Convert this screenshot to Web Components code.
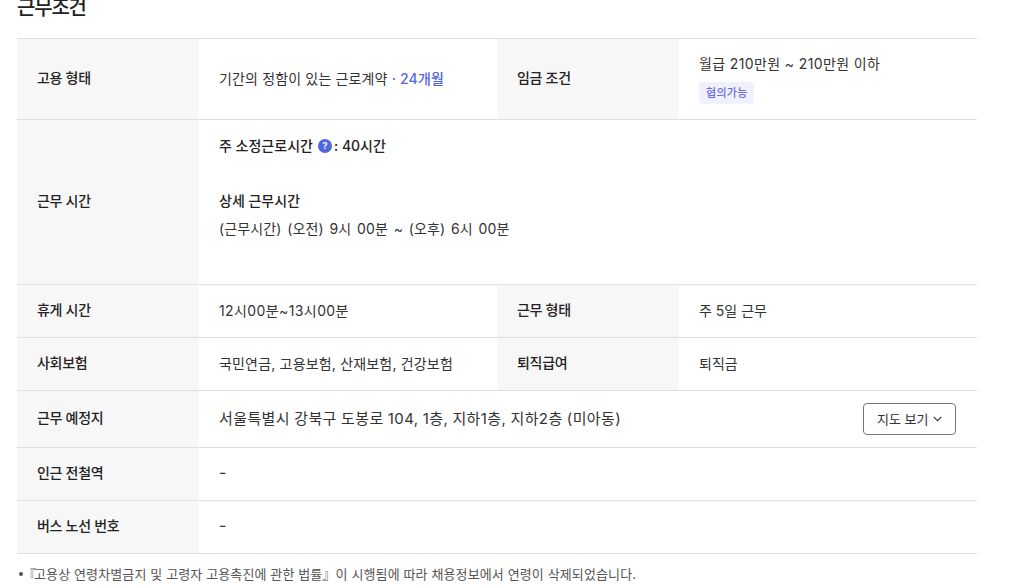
<!DOCTYPE html>
<html lang="ko">
<head>
<meta charset="utf-8">
<style>
  html, body { margin: 0; height: 588px; overflow: hidden; background: #fff; }
  body { font-family: Inter, "Noto Sans CJK KR", sans-serif; color: #333; }
</style>
</head>
<body>
<job-conditions>
  <cond-row>
    <cond-cell label="고용 형태"><span style="letter-spacing:.15px">기간의 정함이 있는 근로계약 <b style="color:#5167e0;font-weight:500">· 24개월</b></span></cond-cell>
    <cond-cell label="임금 조건"><span style="letter-spacing:.37px">월급 210만원 ~ 210만원 이하</span><nego-tag>협의가능</nego-tag></cond-cell>
  </cond-row>
  <cond-row height="165">
    <cond-cell label="근무 시간">
      <work-hours></work-hours>
    </cond-cell>
  </cond-row>
  <cond-row>
    <cond-cell label="휴게 시간"><span style="letter-spacing:.4px">12시00분~13시00분</span></cond-cell>
    <cond-cell label="근무 형태">주 5일 근무</cond-cell>
  </cond-row>
  <cond-row>
    <cond-cell label="사회보험"><span style="letter-spacing:.18px">국민연금, 고용보험, 산재보험, 건강보험</span></cond-cell>
    <cond-cell label="퇴직급여">퇴직금</cond-cell>
  </cond-row>
  <cond-row height="57">
    <cond-cell label="근무 예정지" wide>
      <span style="font-size:15px;letter-spacing:.4px;word-spacing:-.4px">서울특별시 강북구 도봉로 104, 1층, 지하1층, 지하2층 (미아동)</span>
      <map-button slot="action"></map-button>
    </cond-cell>
  </cond-row>
  <cond-row>
    <cond-cell label="인근 전철역"><span style="font-size:16px;line-height:18px;position:relative;top:-1px">-</span></cond-cell>
  </cond-row>
  <cond-row>
    <cond-cell label="버스 노선 번호"><span style="font-size:16px;line-height:18px;position:relative;top:-1px">-</span></cond-cell>
  </cond-row>
</job-conditions>

<script>
class JobConditions extends HTMLElement {
  constructor() {
    super();
    this.attachShadow({ mode: 'open' }).innerHTML = `
      <style>
        :host { display: block; padding: 0 48px 0 17px; margin-top: -5px; }
        h2 {
          margin: 0 0 17px;
          height: 26px;
          line-height: 26px;
          font-size: 20px;
          font-weight: 500;
          letter-spacing: -1.2px;
          color: #222;
        }
        .table { border-top: 1px solid #e0e0e0; }
        .note {
          margin: 11px 0 0;
          padding-left: 2px;
          font-size: 13px;
          line-height: 18px;
          letter-spacing: .12px;
          color: #555;
          display: flex;
          align-items: center;
          gap: 5px;
        }
        .note::before {
          content: '';
          width: 4px;
          height: 4px;
          border-radius: 50%;
          background: #555;
        }
        .open { margin-left: -5px; letter-spacing: -2px; }
      </style>
      <h2>근무조건</h2>
      <div class="table"><slot></slot></div>
      <div class="note"><div><span class="open">『</span>고용상 연령차별금지 및 고령자 고용촉진에 관한 법률』이 시행됨에 따라 채용정보에서 연령이 삭제되었습니다.</div></div>`;
  }
}

class CondRow extends HTMLElement {
  constructor() {
    super();
    this.attachShadow({ mode: 'open' }).innerHTML = `
      <style>
        :host {
          display: flex;
          height: var(--row-height, 52px);
          border-bottom: 1px solid #e0e0e0;
        }
        ::slotted(*) { flex: 1 1 0; min-width: 0; }
      </style>
      <slot></slot>`;
  }

  connectedCallback() {
    const h = this.getAttribute('height');
    if (h) this.style.setProperty('--row-height', (h - 1) + 'px');
    if (this.querySelector('nego-tag')) this.style.setProperty('--row-height', '80px');
  }
}

class CondCell extends HTMLElement {
  constructor() {
    super();
    this.attachShadow({ mode: 'open' }).innerHTML = `
      <style>
        :host {
          display: flex;
          font-size: 14px;
          line-height: 20px;
          color: #333;
        }
        .label {
          flex: 0 0 182px;
          box-sizing: border-box;
          padding: 0 0 2px 20px;
          display: flex;
          align-items: center;
          background: #f7f7f7;
          font-weight: 500;
          letter-spacing: -.3px;
          color: #222;
        }
        .value {
          flex: 1;
          min-width: 0;
          padding: 0 21px 0 20px;
          display: flex;
          align-items: center;
          justify-content: space-between;
        }
      </style>
      <div class="label"></div>
      <div class="value"><div><slot></slot></div><slot name="action"></slot></div>`;
  }

  connectedCallback() {
    this.shadowRoot.querySelector('.label').textContent = this.getAttribute('label');
  }
}

class NegoTag extends HTMLElement {
  constructor() {
    super();
    this.attachShadow({ mode: 'open' }).innerHTML = `
      <style>
        :host {
          display: block;
          width: fit-content;
          margin-top: 8px;
          padding: 0 6px 0 7px;
          height: 22px;
          line-height: 22px;
          border-radius: 4px;
          background: #f0f0fe;
          color: #6a6ee0;
          font-size: 11px;
          font-weight: 500;
          letter-spacing: .3px;
        }
      </style>
      <slot></slot>`;
  }
}

class WorkHours extends HTMLElement {
  constructor() {
    super();
    this.attachShadow({ mode: 'open' }).innerHTML = `
      <style>
        :host { display: block; height: 164px; padding-top: 16px; box-sizing: border-box; line-height: 20px; }
        .strong { font-weight: 500; color: #222; display: flex; align-items: center; white-space: pre; }
        svg { margin: 0 2px 0 5px; }
        .gap { margin-top: 35px; }
        p { margin: 8px 0 0; letter-spacing: .12px; word-spacing: 1.7px; }
      </style>
      <div class="strong">주 소정근로시간<svg width="14" height="14" viewBox="0 0 14 14">
          <circle cx="7" cy="7" r="7" fill="#5167e0"/>
          <text x="7" y="10" text-anchor="middle" font-size="9" font-weight="700" fill="#fff">?</text>
        </svg>: 40시간</div>
      <div class="strong gap">상세 근무시간</div>
      <p>(근무시간) (오전) 9시 00분 ~ (오후) 6시 00분</p>`;
  }
}

class MapButton extends HTMLElement {
  constructor() {
    super();
    this.attachShadow({ mode: 'open' }).innerHTML = `
      <style>
        :host { display: block; flex: none; }
        button {
          display: flex;
          align-items: center;
          gap: 4px;
          box-sizing: border-box;
          width: 93px;
          height: 32px;
          padding: 0 0 0 13px;
          border: 1px solid #777;
          border-radius: 4px;
          background: #fff;
          color: #333;
          font: inherit;
          font-size: 13px;
        }
      </style>
      <button>지도 보기
        <svg width="9" height="6" viewBox="0 0 9 6" fill="none" stroke="#333" stroke-width="1.1"><path d="M.7.8 4.5 4.6 8.3.8"/></svg>
      </button>`;
  }
}

customElements.define('job-conditions', JobConditions);
customElements.define('cond-row', CondRow);
customElements.define('cond-cell', CondCell);
customElements.define('nego-tag', NegoTag);
customElements.define('work-hours', WorkHours);
customElements.define('map-button', MapButton);
</script>
</body>
</html>
